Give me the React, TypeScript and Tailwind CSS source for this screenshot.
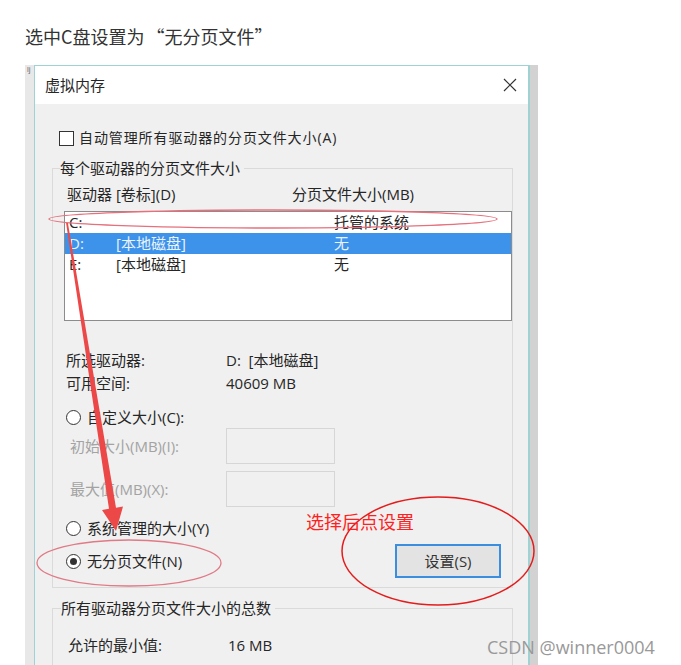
import React from "react";

type GroupProps = {
  label: string;
  lead: string;
  className?: string;
  children: React.ReactNode;
};

const GroupBox: React.FC<GroupProps> = ({ label, lead, className, children }) => (
  <div className={className}>
    <div className="flex h-[20px] items-center">
      <div className={`${lead} h-[10px] self-end border-l border-t border-[#dadada]`} />
      <span className="text-[15px] leading-[20px]">{label}</span>
      <div className="ml-[4px] h-[10px] flex-1 self-end border-r border-t border-[#dadada]" />
    </div>
    <div className="border-x border-b border-[#dadada]">{children}</div>
  </div>
);

const Radio: React.FC<{ checked?: boolean }> = ({ checked }) => (
  <span className="flex h-[15px] w-[15px] items-center justify-center rounded-full border border-[#333] bg-white">
    {checked && <span className="h-[7px] w-[7px] rounded-full bg-[#333]" />}
  </span>
);

const drives = [
  { letter: "C:", label: "", size: "托管的系统", selected: false },
  { letter: "D:", label: "[本地磁盘]", size: "无", selected: true },
  { letter: "E:", label: "[本地磁盘]", size: "无", selected: false },
];

const App: React.FC = () => {
  return (
    <div className="relative h-[665px] w-[681px] overflow-hidden bg-white font-['Open_Sans','Noto_Sans_CJK_SC',sans-serif] text-[#262626]">
      <p className="h-[65px] pl-[25px] pt-[23px] font-['Noto_Sans_CJK_SC',sans-serif] text-[18px] leading-[26px] text-[#333]">
        选中C盘设置为<span className="inline-block w-[20px] text-right">“</span>无分页文件
        <span className="inline-block w-[20px] text-left">”</span>
      </p>

      <div className="ml-[25px] flex h-[600px]">
        <div className="w-[9px] bg-[#e8e8e8] pl-[2px]">
          <span className="block text-[7px] leading-[9px] text-[#555]">lj</span>
        </div>

        <div className="flex w-[496px] flex-col overflow-hidden border-l border-r-2 border-t border-[#9fd3d3] bg-[#f0f0f0]">
          <div className="flex h-[38px] shrink-0 items-center justify-between bg-white pl-[10px] pr-[11px]">
            <span className="text-[15px] leading-[20px]">虚拟内存</span>
            <svg width="14" height="14" viewBox="0 0 14 14">
              <path d="M1 1L13 13M13 1L1 13" stroke="#333" strokeWidth="1.2" fill="none" />
            </svg>
          </div>

          <div className="flex shrink-0 flex-col">
            <div className="ml-[24px] mt-[24px] flex h-[20px] items-center gap-[5px]">
              <span className="h-[15px] w-[15px] border border-[#333] bg-white" />
              <span className="text-[14px] leading-[20px] tracking-[0.9px]">自动管理所有驱动器的分页文件大小(A)</span>
            </div>

            <GroupBox label="每个驱动器的分页文件大小" lead="w-[8px]" className="ml-[17px] mt-[10px] w-[461px] shrink-0">
              <div className="flex flex-col pb-[9px] pl-[11px] text-[15px]">
                <div className="mt-[6px] flex h-[20px] items-center">
                  <span className="ml-[3px] w-[225px]">驱动器 [卷标](D)</span>
                  <span>分页文件大小(MB)</span>
                </div>

                <div className="mt-[7px] flex h-[110px] flex-col border border-[#8c8c8c] bg-white">
                  {drives.map((d) => (
                    <div
                      key={d.letter}
                      className={`flex h-[21px] shrink-0 items-center pl-[4px] ${d.selected ? "bg-[#3d92ea] text-[#eaf3fd]" : ""}`}
                    >
                      <span className="w-[47px]">{d.letter}</span>
                      <span className="w-[218px]">{d.label}</span>
                      <span>{d.size}</span>
                    </div>
                  ))}
                </div>

                <div className="ml-[2px] mt-[28px] flex h-[23px] items-center">
                  <span className="w-[160px]">所选驱动器:</span>
                  <span>D:&nbsp;&nbsp;[本地磁盘]</span>
                </div>
                <div className="ml-[2px] flex h-[23px] items-center">
                  <span className="w-[160px]">可用空间:</span>
                  <span>40609 MB</span>
                </div>

                <div className="ml-[2px] mt-[12px] flex h-[20px] items-center gap-[6px]">
                  <Radio />
                  <span>自定义大小(C):</span>
                </div>

                <div className="mt-[1px] flex items-center">
                  <span className="ml-[6px] w-[156px] text-[#a3a3a3]">初始大小(MB)(I):</span>
                  <span className="h-[36px] w-[109px] border border-[#d6d6d6]" />
                </div>
                <div className="mt-[7px] flex items-center">
                  <span className="ml-[6px] w-[156px] text-[#a3a3a3]">最大值(MB)(X):</span>
                  <span className="h-[36px] w-[109px] border border-[#d6d6d6]" />
                </div>

                <div className="ml-[2px] mt-[11px] flex h-[20px] items-center gap-[6px]">
                  <Radio />
                  <span>系统管理的大小(Y)</span>
                </div>

                <div className="mt-[6px] flex h-[34px] items-center justify-between">
                  <div className="ml-[2px] flex items-center gap-[6px]">
                    <Radio checked />
                    <span>无分页文件(N)</span>
                  </div>
                  <button className="mr-[11px] h-[34px] w-[106px] border-2 border-[#3b8de0] bg-[#e3e3e3] text-[15px] text-[#333]">
                    设置(S)
                  </button>
                </div>
              </div>
            </GroupBox>

            <GroupBox label="所有驱动器分页文件大小的总数" lead="w-[9px]" className="ml-[17px] mt-[10px] w-[461px] shrink-0">
              <div className="h-[80px] pl-[15px] pt-[17px] text-[15px]">
                <div className="flex h-[20px] items-center">
                  <span className="w-[160px]">允许的最小值:</span>
                  <span>16 MB</span>
                </div>
              </div>
            </GroupBox>
          </div>
        </div>

        <div className="w-[8px] bg-[#d2d2d2]" />
      </div>

      <svg className="pointer-events-none absolute left-0 top-0" width="681" height="665" viewBox="0 0 681 665">
        <ellipse cx="273" cy="219" rx="224" ry="9" fill="none" stroke="#e6707c" strokeWidth="1.4" />
        <polygon
          points="67.9,222.9 116,507.8 123,506.6 116,531 102,510 109,508.8 66.1,223.1"
          fill="#ec4848"
        />
        <ellipse cx="129" cy="563" rx="92" ry="23" fill="none" stroke="#e07a86" strokeWidth="1.3" />
        <ellipse cx="438" cy="551" rx="96" ry="54" fill="none" stroke="#e41c1c" strokeWidth="1.5" />
      </svg>

      <span className="absolute left-[306px] top-[509px] font-['Noto_Sans_CJK_SC',sans-serif] text-[18px] leading-[24px] text-[#ff1f1f]">
        选择后点设置
      </span>

      <span className="absolute left-[487px] top-[635px] text-[18px] leading-[24px] text-[#999]">CSDN @winner0004</span>
    </div>
  );
};

export default App;
